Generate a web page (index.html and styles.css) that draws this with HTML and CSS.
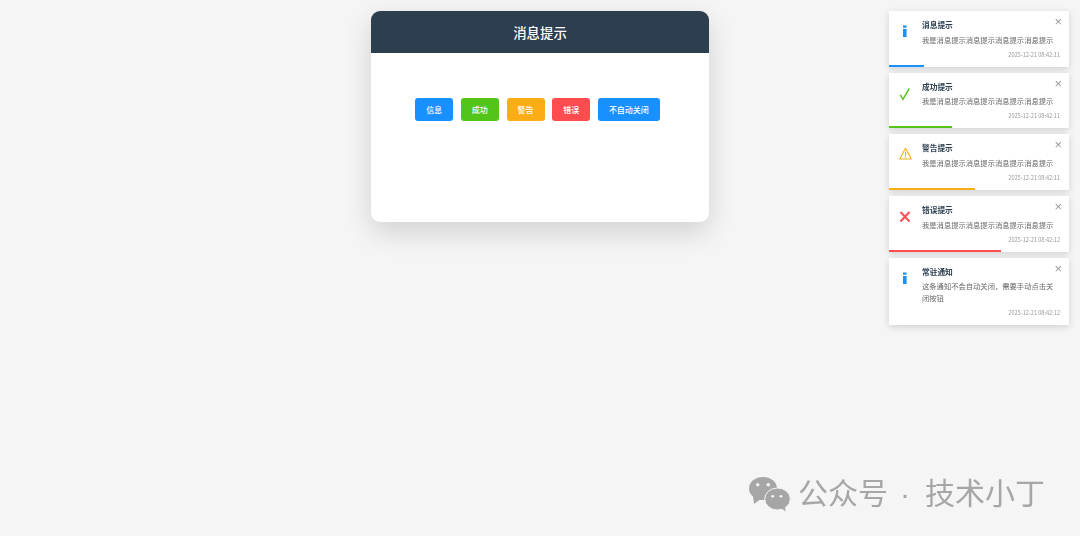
FILE: index.html
```html
<!DOCTYPE html>
<html lang="zh-CN">
<head>
  <meta charset="UTF-8">
  <meta name="viewport" content="width=device-width, initial-scale=1.0">
  <title>消息提示</title>
  <link rel="stylesheet" href="styles.css">
</head>
<body>
  <div class="card">
    <div class="card-header">消息提示</div>
    <div class="card-body">
      <button class="btn btn-info">信息</button>
      <button class="btn btn-success">成功</button>
      <button class="btn btn-warning">警告</button>
      <button class="btn btn-error">错误</button>
      <button class="btn btn-info">不自动关闭</button>
    </div>
  </div>

  <div class="toasts">
    <div class="toast">
      <svg class="toast-icon" viewBox="0 0 16 16"><rect x="6" y="1.500" width="3.600" height="2.200" fill="#1890ff"/><rect x="6" y="5" width="3.600" height="8" fill="#1890ff"/></svg>
      <div class="toast-main">
        <div class="toast-title">消息提示</div>
        <div class="toast-msg">我是消息提示消息提示消息提示消息提示</div>
        <div class="toast-time">2025-12-21 08:42:11</div>
      </div>
      <span class="toast-close">×</span>
      <div class="toast-bar bar-info" style="width: 35px"></div>
    </div>
    <div class="toast">
      <svg class="toast-icon" viewBox="0 0 16 16"><path d="M3.300 8.800 L6 13.300 L12.300 2.300" fill="none" stroke="#52c41a" stroke-width="1.500"/></svg>
      <div class="toast-main">
        <div class="toast-title">成功提示</div>
        <div class="toast-msg">我是消息提示消息提示消息提示消息提示</div>
        <div class="toast-time">2025-12-21 08:42:11</div>
      </div>
      <span class="toast-close">×</span>
      <div class="toast-bar bar-success" style="width: 63px"></div>
    </div>
    <div class="toast">
      <svg class="toast-icon" viewBox="0 0 16 16"><path d="M8.500 1.200 L14.300 12 H2.700 Z" fill="none" stroke="#faad14" stroke-width="1.100" stroke-linejoin="round"/><rect x="7.900" y="4.800" width="1.200" height="3.800" fill="#faad14"/><rect x="7.900" y="9.500" width="1.200" height="1.300" fill="#faad14"/></svg>
      <div class="toast-main">
        <div class="toast-title">警告提示</div>
        <div class="toast-msg">我是消息提示消息提示消息提示消息提示</div>
        <div class="toast-time">2025-12-21 08:42:11</div>
      </div>
      <span class="toast-close">×</span>
      <div class="toast-bar bar-warning" style="width: 86px"></div>
    </div>
    <div class="toast">
      <svg class="toast-icon" viewBox="0 0 16 16"><path d="M3.500 3 L12.500 12.500 M12.500 3 L3.500 12.500" fill="none" stroke="#ff4d4f" stroke-width="2"/></svg>
      <div class="toast-main">
        <div class="toast-title">错误提示</div>
        <div class="toast-msg">我是消息提示消息提示消息提示消息提示</div>
        <div class="toast-time">2025-12-21 08:42:12</div>
      </div>
      <span class="toast-close">×</span>
      <div class="toast-bar bar-error" style="width: 112px"></div>
    </div>
    <div class="toast">
      <svg class="toast-icon" viewBox="0 0 16 16"><rect x="6" y="1.500" width="3.600" height="2.200" fill="#1890ff"/><rect x="6" y="5" width="3.600" height="8" fill="#1890ff"/></svg>
      <div class="toast-main">
        <div class="toast-title">常驻通知</div>
        <div class="toast-msg">这条通知不会自动关闭，需要手动点击关闭按钮</div>
        <div class="toast-time">2025-12-21 08:42:12</div>
      </div>
      <span class="toast-close">×</span>
    </div>
  </div>

  <div class="watermark">
    <svg class="wechat" viewBox="0 0 43 36">
      <ellipse cx="15" cy="12.500" rx="14" ry="11.500" fill="#a6a6a6"/>
      <path d="M5 19 L6 28 L14 22 Z" fill="#a6a6a6"/>
      <ellipse cx="29.500" cy="23" rx="12.800" ry="11" fill="#a6a6a6" stroke="#f5f5f5" stroke-width="1"/>
      <path d="M33 32 L37.500 35.500 L37 29 Z" fill="#a6a6a6"/>
      <circle cx="9.700" cy="8.700" r="1.800" fill="#f5f5f5"/>
      <circle cx="20.300" cy="8.700" r="1.800" fill="#f5f5f5"/>
      <circle cx="24.700" cy="20.300" r="1.400" fill="#f5f5f5"/>
      <circle cx="33" cy="20.300" r="1.400" fill="#f5f5f5"/>
    </svg>
    <span class="watermark-text">公众号<span class="watermark-dot">·</span>技术小丁</span>
  </div>
</body>
</html>
```

FILE: styles.css
```css
* {
  box-sizing: border-box;
}
body {
  font-family: "Noto Sans CJK SC", "Noto Sans", sans-serif;
  background-color: #f5f5f5;
  margin: 0;
  padding-top: 11px;
  height: 536px;
  overflow: hidden;
  color: #333;
}
.card {
  width: 338px;
  height: 211px;
  margin: 0 auto;
  background-color: white;
  border-radius: 9px;
  overflow: hidden;
  box-shadow: 0 10px 28px rgba(0, 0, 0, 0.15);
}
.card-header {
  height: 42px;
  line-height: 42px;
  background-color: #2c3e50;
  color: white;
  text-align: center;
  font-size: 13.4px;
  font-weight: 500;
}
.card-body {
  display: flex;
  justify-content: center;
  gap: 7.700px;
  padding-top: 45px;
  padding-right: 5px;
}
.btn {
  height: 23px;
  padding: 0 11px;
  border: none;
  border-radius: 3px;
  color: white;
  font-family: inherit;
  font-size: 8px;
  font-weight: 500;
  cursor: pointer;
}
.btn-info { background-color: #1890ff; }
.btn-success { background-color: #52c41a; }
.btn-warning { background-color: #faad14; }
.btn-error { background-color: #ff4d4f; }

.toasts {
  position: fixed;
  top: 11px;
  right: 11px;
  width: 180px;
  display: flex;
  flex-direction: column;
  gap: 6px;
}
.toast {
  position: relative;
  display: flex;
  background-color: white;
  padding: 7px 9px 8px 8px;
  box-shadow: 0 2px 7px rgba(0, 0, 0, 0.15);
}
.toast-icon {
  flex: none;
  width: 16px;
  height: 16px;
  margin-top: 6px;
  margin-right: 9px;
}
.toast-main {
  flex: 1;
  min-width: 0;
  padding-right: 6px;
}
.toast-title {
  font-size: 7.700px;
  font-weight: 700;
  line-height: 14.170px;
  color: #2c3e50;
}
.toast-msg {
  margin-top: 2.500px;
  font-size: 7.300px;
  line-height: 11.500px;
  color: #666;
}
.toast-time {
  margin-top: 4.500px;
  margin-right: -6px;
  text-align: right;
  font-size: 5.600px;
  line-height: 8px;
  color: #999;
}
.toast-close {
  position: absolute;
  top: 4px;
  right: 7px;
  font-family: "Liberation Sans", sans-serif;
  font-size: 13px;
  line-height: 14px;
  color: #999;
}
.toast-bar {
  position: absolute;
  left: 0;
  bottom: 0;
  height: 2px;
}
.bar-info { background-color: #1890ff; }
.bar-success { background-color: #52c41a; }
.bar-warning { background-color: #faad14; }
.bar-error { background-color: #ff4d4f; }

.watermark {
  position: fixed;
  left: 748px;
  top: 474px;
  display: flex;
  align-items: center;
  gap: 7px;
  font-size: 30px;
  line-height: 38px;
  color: #a6a6a6;
  white-space: nowrap;
}
.wechat {
  width: 43px;
  height: 36px;
}
.watermark-text {
  margin-top: -2px;
}
.watermark-dot {
  margin: 0 15px 0 12px;
  font-family: "Liberation Sans", sans-serif;
}
```
